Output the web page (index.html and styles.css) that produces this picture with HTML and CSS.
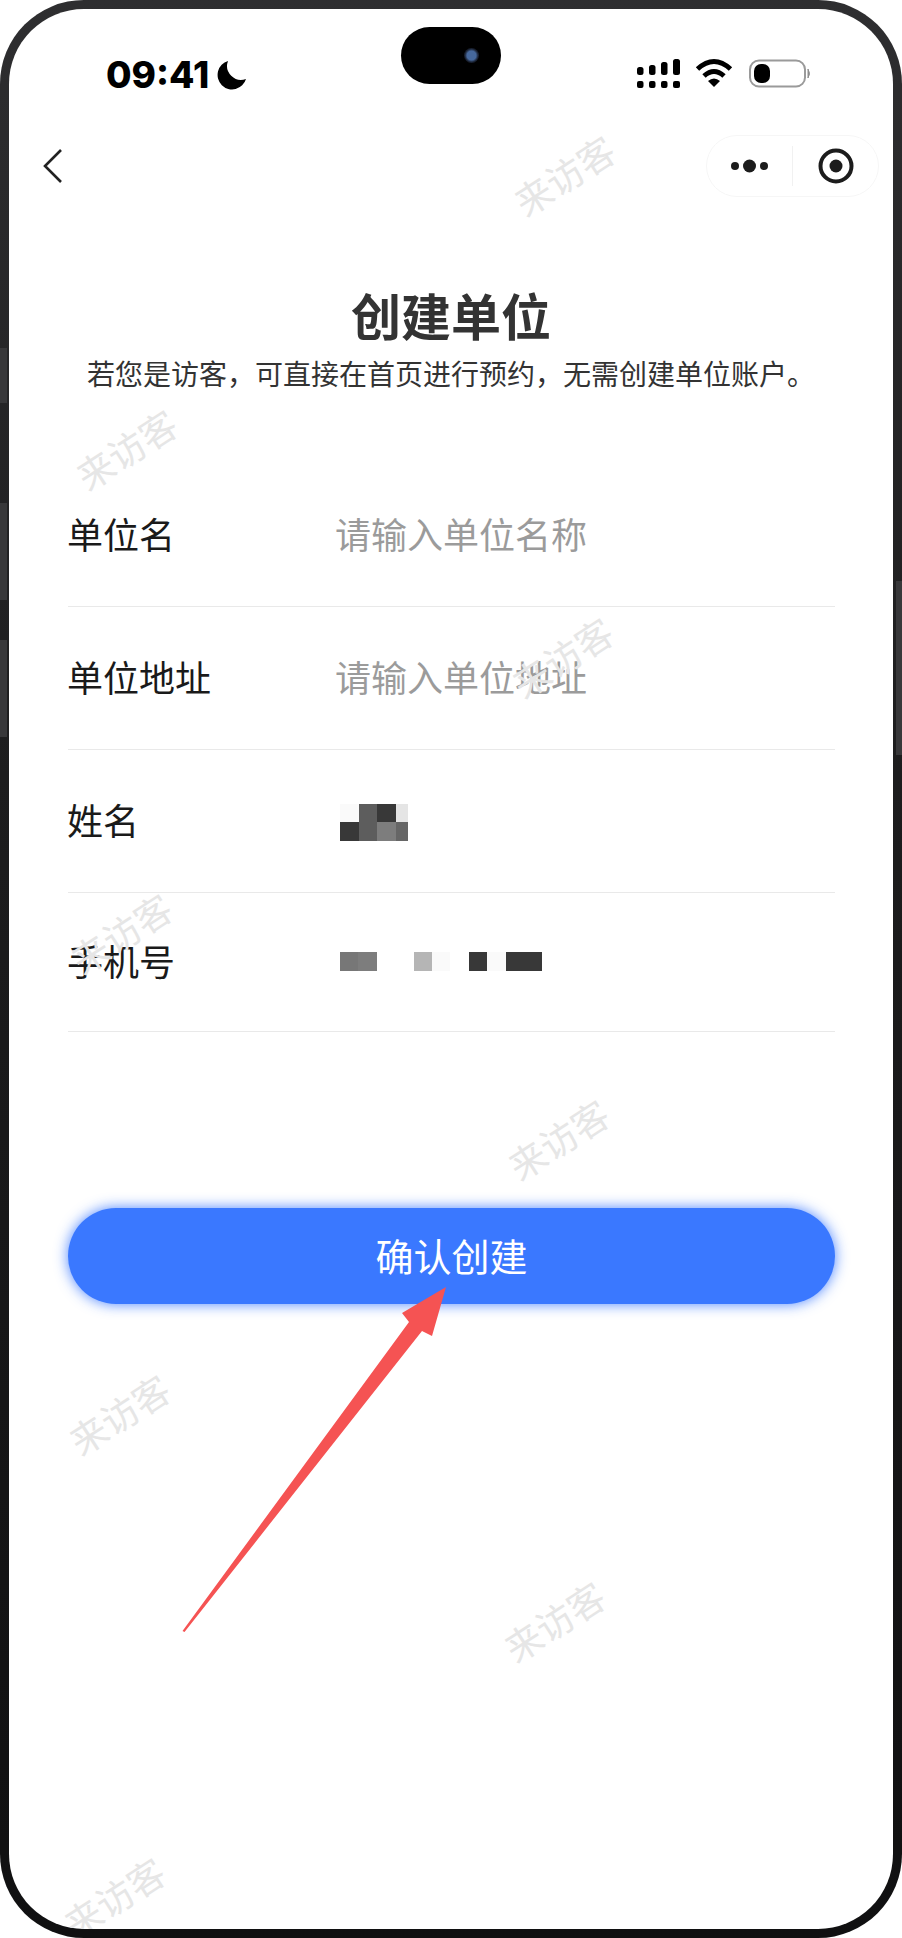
FILE: index.html
```html
<!DOCTYPE html>
<html lang="zh-CN">
<head>
<meta charset="utf-8">
<title>创建单位</title>
<link rel="stylesheet" href="styles.css">
</head>
<body>
<div class="phone">
  <i class="side side-l1"></i><i class="side side-l2"></i><i class="side side-l3"></i><i class="side side-r1"></i>
  <main class="screen">
    <header class="status">
      <div class="clock">
        <span class="time">09:41</span>
        <svg class="moon" viewBox="0 0 30 30"><path d="M11 1A14.5 14.5 0 1 0 29 19A14 14 0 0 1 11 1Z"/></svg>
      </div>
      <svg class="status-icons" viewBox="625 50 200 50">
        <g fill="#000">
          <rect x="637" y="67" width="6.5" height="8" rx="2.5"/><rect x="649" y="65" width="6.5" height="10" rx="2.5"/><rect x="661" y="62" width="6.5" height="13" rx="2.5"/><rect x="673" y="59" width="7" height="16" rx="2.5"/>
          <rect x="637" y="81" width="6.5" height="7" rx="2"/><rect x="649" y="81" width="6.5" height="7" rx="2"/><rect x="661" y="81" width="6.5" height="7" rx="2"/><rect x="673" y="81" width="7" height="7" rx="2"/>
          <path d="M708 81Q714 76 720 81L714 87Z"/>
        </g>
        <path d="M697.5 69Q714 54 730.5 69M704 76Q714 67 724 76" fill="none" stroke="#000" stroke-width="5"/>
        <rect x="750" y="60.5" width="55" height="26" rx="9" fill="none" stroke="#9a9a9a" stroke-width="2"/>
        <rect x="754" y="64" width="16" height="19" rx="7" fill="#000"/>
        <path d="M808 69Q811 73.5 808 78Z" fill="#8e8e8e" stroke="#8e8e8e"/>
      </svg>
    </header>
    <div class="island"><i class="lens"></i></div>
    <nav class="nav">
      <svg class="back" viewBox="0 0 20 34"><path d="M18 1L2 17L18 33" fill="none" stroke="#222" stroke-width="2.6"/></svg>
      <div class="capsule">
        <div class="cap-part">
          <svg class="cap-dots" viewBox="0 0 40 14"><circle cx="5" cy="7" r="4"/><circle cx="19.5" cy="7" r="6.5"/><circle cx="34" cy="7" r="4"/></svg>
        </div>
        <i class="cap-divider"></i>
        <div class="cap-part">
          <svg class="cap-target" viewBox="0 0 38 38"><circle cx="19" cy="19" r="15.5" fill="none" stroke="#1c1c1c" stroke-width="4"/><circle cx="19" cy="19" r="6.5" fill="#1c1c1c"/></svg>
        </div>
      </div>
    </nav>
    <h1 class="title">创建单位</h1>
    <p class="subtitle">若您是访客&#xFF0C;可直接在首页进行预约&#xFF0C;无需创建单位账户。</p>
    <section class="form">
      <div class="row"><span class="label">单位名</span><span class="placeholder">请输入单位名称</span></div>
      <div class="row"><span class="label">单位地址</span><span class="placeholder">请输入单位地址</span></div>
      <div class="row">
        <span class="label">姓名</span>
        <div class="mosaic mosaic-name">
          <i class="c-fa"></i><i class="c-5d"></i><i class="c-38"></i><i class="c-e5"></i>
          <i class="c-38"></i><i class="c-5d"></i><i class="c-7d"></i><i class="c-66"></i>
        </div>
      </div>
      <div class="row row-last">
        <span class="label">手机号</span>
        <div class="mosaic mosaic-phone">
          <i class="c-77"></i><i class="c-7d"></i><i></i><i></i><i class="c-b5"></i><i class="c-fa"></i><i></i><i class="c-38"></i><i class="c-fa"></i><i class="c-38"></i><i class="c-38"></i>
        </div>
      </div>
    </section>
    <button class="confirm" type="button">确认创建</button>
    <span class="wm wm-1">来访客</span>
    <span class="wm wm-2">来访客</span>
    <span class="wm wm-3">来访客</span>
    <span class="wm wm-4">来访客</span>
    <span class="wm wm-5">来访客</span>
    <span class="wm wm-6">来访客</span>
    <span class="wm wm-7">来访客</span>
    <span class="wm wm-8">来访客</span>
  </main>
  <svg class="arrow" viewBox="170 1280 290 360"><polygon points="182.5,1631 184.5,1632 422,1331 432,1336 446,1287 402,1313 409,1322" fill="#f55353"/></svg>
</div>
</body>
</html>
```
FILE: styles.css
```css
* { box-sizing: border-box; }
html, body { margin: 0; padding: 0; background: #fff; }
body { width: 902px; height: 1938px; overflow: hidden; font-family: "Noto Sans CJK SC", "Noto Sans", sans-serif; }

.phone {
  position: relative;
  width: 902px;
  height: 1938px;
  padding: 9px;
  border-radius: 84px;
  background: linear-gradient(180deg, #2e2e30 0%, #1d1d1e 40%, #101011 100%);
}
.side { position: absolute; background: #38383a; }
.side-l1 { left: 0; top: 348px; width: 7px; height: 55px; }
.side-l2 { left: 0; top: 503px; width: 7px; height: 97px; }
.side-l3 { left: 0; top: 640px; width: 7px; height: 97px; }
.side-r1 { right: 0; top: 581px; width: 6px; height: 174px; }

.screen {
  position: relative;
  display: flex;
  flex-direction: column;
  height: 1920px;
  background: #fff;
  border-radius: 75px;
  overflow: hidden;
}

.status {
  display: flex;
  justify-content: space-between;
  align-items: center;
  height: 50px;
  margin-top: 41px;
  padding: 0 68px 0 97px;
}
.clock { display: flex; align-items: center; gap: 8px; }
.time { font: 800 37px/50px Inter, "Liberation Sans", sans-serif; color: #000; }
.moon { width: 30px; height: 30px; fill: #000; }
.status-icons { width: 200px; height: 50px; }

.island {
  position: absolute;
  left: 392px;
  top: 18px;
  width: 100px;
  height: 57px;
  border-radius: 29px;
  background: #000;
}
.lens {
  position: absolute;
  left: 63px;
  top: 21px;
  width: 15px;
  height: 15px;
  border-radius: 50%;
  background: radial-gradient(circle, #46689c 0 42%, #1a2233 62%, #0a0c12 100%);
}

.nav {
  display: flex;
  justify-content: space-between;
  align-items: center;
  height: 62px;
  margin-top: 35px;
  padding: 0 14px 0 34px;
}
.back { width: 20px; height: 34px; }
.capsule {
  display: flex;
  align-items: center;
  width: 173px;
  height: 62px;
  border: 1px solid #f6f6f6;
  border-radius: 31px;
}
.cap-part { flex: 1; display: flex; justify-content: center; align-items: center; }
.cap-divider { width: 1px; height: 40px; background: #f1f1f1; }
.cap-dots { width: 40px; height: 14px; fill: #1c1c1c; }
.cap-target { width: 38px; height: 38px; }

.title {
  margin: 92px 0 0;
  font-size: 50px;
  line-height: 50px;
  font-weight: 700;
  text-align: center;
  color: #333;
}
.subtitle {
  margin: 14px 0 0;
  font-size: 28px;
  line-height: 40px;
  text-align: center;
  color: #333;
  white-space: nowrap;
}

.form { margin: 71px 58px 0 59px; }
.row {
  display: flex;
  align-items: center;
  height: 143px;
  padding-bottom: 4px;
  border-bottom: 1px solid #e9e9e9;
}
.row-last { height: 139px; }
.label { width: 268px; margin-left: -1px; font-size: 36px; line-height: 50px; color: #1a1a1a; }
.placeholder { font-size: 36px; line-height: 50px; color: #9b9b9b; }

.mosaic { display: grid; grid-auto-rows: 18.5px; margin: 6px 0 0 5px; }
.mosaic-name { grid-template-columns: repeat(3, 18.5px) 12px; }
.mosaic-phone { grid-template-columns: repeat(11, 18.4px); margin-top: 3px; }
.c-fa { background: #fafafa; }
.c-e5 { background: #e5e5e5; }
.c-b5 { background: #b5b5b5; }
.c-7d { background: #7d7d7d; }
.c-77 { background: #777; }
.c-66 { background: #666; }
.c-5d { background: #5d5d5d; }
.c-38 { background: #383838; }

.confirm {
  display: block;
  width: 767px;
  height: 96px;
  margin: 176px 58px 0 59px;
  padding: 0 0 4px;
  border: 0;
  border-radius: 48px;
  background: #3a78ff;
  box-shadow: 0 0 14px rgba(58, 120, 255, .9);
  color: #fff;
  font-family: inherit;
  font-size: 38px;
}

.wm {
  position: absolute;
  font-size: 37px;
  line-height: 37px;
  color: #e6e6e6;
  white-space: nowrap;
  transform: translate(-50%, -50%) rotate(-33deg);
}
.wm-1 { left: 555px; top: 166px; }
.wm-2 { left: 117px; top: 440px; }
.wm-3 { left: 553px; top: 648px; }
.wm-4 { left: 112px; top: 924px; }
.wm-5 { left: 549px; top: 1130px; }
.wm-6 { left: 110px; top: 1405px; }
.wm-7 { left: 545px; top: 1612px; }
.wm-8 { left: 105px; top: 1888px; }

.arrow { position: absolute; left: 170px; top: 1280px; width: 290px; height: 360px; }
```
